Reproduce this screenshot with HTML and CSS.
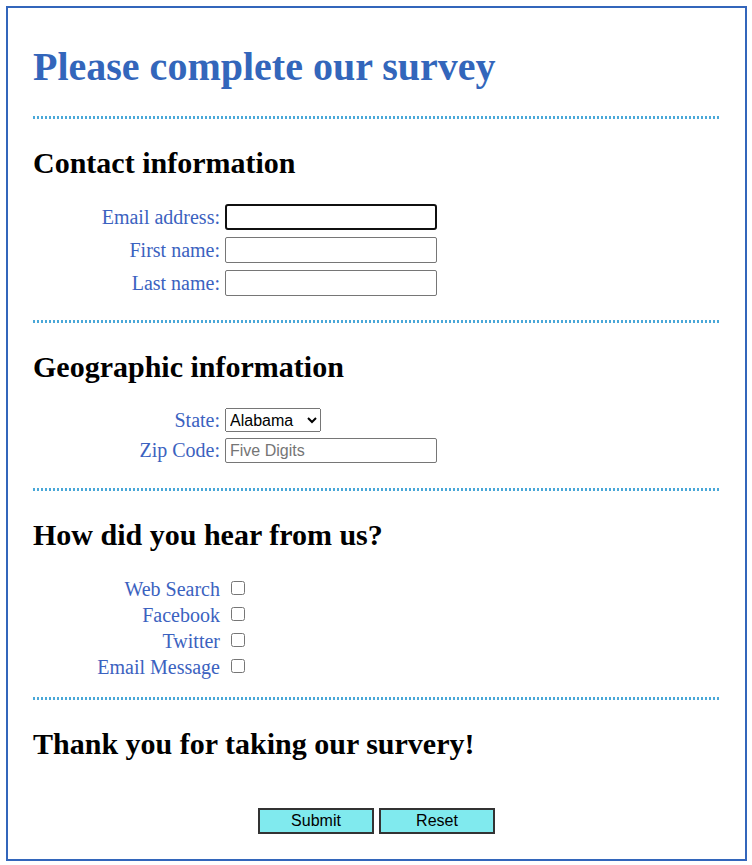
FILE: index.html
```html
<!DOCTYPE html>
<html lang="en">
<head>
<meta charset="utf-8">
<title>Survey</title>
<link rel="stylesheet" href="styles.css">
</head>
<body>
<div class="page">
  <h1 class="title">Please complete our survey</h1>

  <section class="sec">
    <h2 class="sec-title">Contact information</h2>
    <div class="form-grid">
      <label class="lbl" for="email">Email address:</label>
      <input class="field focused" id="email" type="text">
      <label class="lbl" for="first">First name:</label>
      <input class="field" id="first" type="text">
      <label class="lbl" for="last">Last name:</label>
      <input class="field" id="last" type="text">
    </div>
  </section>

  <section class="sec">
    <h2 class="sec-title">Geographic information</h2>
    <div class="form-grid geo">
      <label class="lbl" for="state">State:</label>
      <select class="state" id="state">
        <option>Alabama</option>
        <option>Alaska</option>
        <option>Arizona</option>
      </select>
      <label class="lbl" for="zip">Zip Code:</label>
      <input class="field zip" id="zip" type="text" placeholder="Five Digits">
    </div>
  </section>

  <section class="sec">
    <h2 class="sec-title">How did you hear from us?</h2>
    <div class="check-grid">
      <label class="lbl-c" for="c1">Web Search</label>
      <input class="box" id="c1" type="checkbox">
      <label class="lbl-c" for="c2">Facebook</label>
      <input class="box" id="c2" type="checkbox">
      <label class="lbl-c" for="c3">Twitter</label>
      <input class="box" id="c3" type="checkbox">
      <label class="lbl-c" for="c4">Email Message</label>
      <input class="box" id="c4" type="checkbox">
    </div>
  </section>

  <section class="sec last">
    <h2 class="sec-title">Thank you for taking our survery!</h2>
    <div class="actions">
      <button class="btn" type="button">Submit</button>
      <button class="btn" type="button">Reset</button>
    </div>
  </section>
</div>
</body>
</html>
```

FILE: styles.css
```css
html, body {
  margin: 0;
  padding: 0;
  background: #ffffff;
}

body {
  font-family: "Liberation Serif", "Times New Roman", serif;
  color: #000000;
}

.page {
  margin: 6px 5px 4px 6px;
  border: 2px solid #3366bb;
  padding: 0 25px 25px 25px;
}

.title {
  margin: 0;
  padding: 36px 0 26px 0;
  font-size: 40px;
  line-height: 46px;
  font-weight: bold;
  color: #3366bb;
}

.sec {
  background-image: repeating-linear-gradient(to right, #4aa8d8 0 2px, transparent 2px 4px);
  background-size: 100% 3px;
  background-repeat: no-repeat;
  background-position: left top;
  padding-top: 29px;
}

.sec-title {
  margin: 0 0 23px 0;
  font-size: 30px;
  line-height: 36px;
  font-weight: bold;
  color: #000000;
}

.form-grid {
  display: grid;
  grid-template-columns: 187px auto;
  column-gap: 5px;
  row-gap: 7px;
  align-items: center;
  justify-items: start;
  padding-bottom: 24px;
}

.form-grid.geo {
  row-gap: 6px;
  padding-bottom: 25px;
}

.lbl, .lbl-c {
  justify-self: end;
  text-align: right;
  font-size: 20px;
  color: #3b62c0;
}

.lbl {
  line-height: 20px;
  padding-bottom: 1px;
}

.field {
  box-sizing: border-box;
  width: 212px;
  height: 26px;
  margin: 0;
  padding: 1px 4px;
  border: 1px solid #767676;
  border-radius: 2px;
  font-family: "Liberation Sans", Arial, sans-serif;
  font-size: 16px;
  background: #ffffff;
  outline: none;
}

.field.zip {
  height: 25px;
}

.field.focused {
  border: 2px solid #101010;
  border-radius: 3px;
}

.field::placeholder {
  color: #757575;
}

.state {
  box-sizing: border-box;
  width: 96px;
  height: 24px;
  margin: 0;
  font-family: "Liberation Sans", Arial, sans-serif;
  font-size: 16px;
  color: #000000;
}

.check-grid {
  display: grid;
  grid-template-columns: 187px auto;
  grid-auto-rows: 26px;
  column-gap: 0;
  align-items: start;
  justify-items: start;
  padding-bottom: 17px;
}

.lbl-c {
  line-height: 26px;
}

.box {
  width: 14px;
  height: 14px;
  margin: 5px 0 0 11px;
}

.sec.last .sec-title {
  margin-bottom: 46px;
}

.actions {
  display: flex;
  justify-content: center;
  gap: 5px;
}

.btn {
  box-sizing: border-box;
  width: 116px;
  height: 26px;
  margin: 0;
  padding: 0;
  background: #80eaee;
  border: 2px solid #333333;
  font-family: "Liberation Sans", Arial, sans-serif;
  font-size: 16px;
  color: #000000;
}
```
